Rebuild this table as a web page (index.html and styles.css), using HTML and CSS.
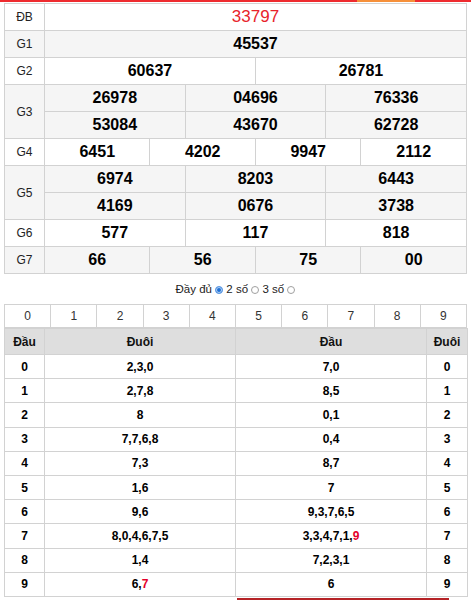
FILE: index.html
```html
<!DOCTYPE html>
<html lang="vi">
<head>
<meta charset="utf-8">
<title>KQXS</title>
<link rel="stylesheet" href="styles.css">
</head>
<body>
<div class="topbar"><span class="topbar-accent"></span></div>

<table class="kq">
  <colgroup>
    <col class="c-lbl">
    <col><col><col><col><col><col><col><col><col><col><col><col>
  </colgroup>
  <tbody>
    <tr class="odd">
      <td class="lbl">ĐB</td>
      <td class="v red" colspan="12">33797</td>
    </tr>
    <tr class="even">
      <td class="lbl">G1</td>
      <td class="v" colspan="12">45537</td>
    </tr>
    <tr class="odd">
      <td class="lbl">G2</td>
      <td class="v" colspan="6">60637</td>
      <td class="v" colspan="6">26781</td>
    </tr>
    <tr class="even">
      <td class="lbl" rowspan="2">G3</td>
      <td class="v" colspan="4">26978</td>
      <td class="v" colspan="4">04696</td>
      <td class="v" colspan="4">76336</td>
    </tr>
    <tr class="even">
      <td class="v" colspan="4">53084</td>
      <td class="v" colspan="4">43670</td>
      <td class="v" colspan="4">62728</td>
    </tr>
    <tr class="odd">
      <td class="lbl">G4</td>
      <td class="v" colspan="3">6451</td>
      <td class="v" colspan="3">4202</td>
      <td class="v" colspan="3">9947</td>
      <td class="v" colspan="3">2112</td>
    </tr>
    <tr class="even">
      <td class="lbl" rowspan="2">G5</td>
      <td class="v" colspan="4">6974</td>
      <td class="v" colspan="4">8203</td>
      <td class="v" colspan="4">6443</td>
    </tr>
    <tr class="even">
      <td class="v" colspan="4">4169</td>
      <td class="v" colspan="4">0676</td>
      <td class="v" colspan="4">3738</td>
    </tr>
    <tr class="odd">
      <td class="lbl">G6</td>
      <td class="v" colspan="4">577</td>
      <td class="v" colspan="4">117</td>
      <td class="v" colspan="4">818</td>
    </tr>
    <tr class="even">
      <td class="lbl">G7</td>
      <td class="v" colspan="3">66</td>
      <td class="v" colspan="3">56</td>
      <td class="v" colspan="3">75</td>
      <td class="v" colspan="3">00</td>
    </tr>
  </tbody>
</table>

<div class="options">Đầy đủ <span class="radio checked"></span> 2 số <span class="radio"></span> 3 số <span class="radio"></span></div>

<table class="digits">
  <tr>
    <td>0</td><td>1</td><td>2</td><td>3</td><td>4</td><td>5</td><td>6</td><td>7</td><td>8</td><td>9</td>
  </tr>
</table>

<table class="lt">
  <colgroup>
    <col class="c-dau">
    <col class="c-mid">
    <col class="c-mid2">
    <col class="c-duoi">
  </colgroup>
  <thead>
    <tr><th>Đầu</th><th>Đuôi</th><th>Đầu</th><th>Đuôi</th></tr>
  </thead>
  <tbody>
    <tr><td>0</td><td>2,3,0</td><td>7,0</td><td>0</td></tr>
    <tr><td>1</td><td>2,7,8</td><td>8,5</td><td>1</td></tr>
    <tr><td>2</td><td>8</td><td>0,1</td><td>2</td></tr>
    <tr><td>3</td><td>7,7,6,8</td><td>0,4</td><td>3</td></tr>
    <tr><td>4</td><td>7,3</td><td>8,7</td><td>4</td></tr>
    <tr><td>5</td><td>1,6</td><td>7</td><td>5</td></tr>
    <tr><td>6</td><td>9,6</td><td>9,3,7,6,5</td><td>6</td></tr>
    <tr><td>7</td><td>8,0,4,6,7,5</td><td>3,3,4,7,1,<span class="hl">9</span></td><td>7</td></tr>
    <tr><td>8</td><td>1,4</td><td>7,2,3,1</td><td>8</td></tr>
    <tr><td>9</td><td>6,<span class="hl">7</span></td><td>6</td><td>9</td></tr>
  </tbody>
</table>

<div class="bottom-line"></div>
</body>
</html>
```

FILE: styles.css
```css
html, body {
  margin: 0;
  padding: 0;
  background: #fff;
}

body {
  font-family: "Liberation Sans", Arial, sans-serif;
  color: #000;
  width: 471px;
}

.topbar {
  height: 2px;
  background: #ee2b2f;
  display: flex;
  justify-content: flex-end;
  padding-right: 56px;
  margin-bottom: 1px;
}

.topbar-accent {
  display: block;
  width: 58px;
  height: 2px;
  background: #f6903a;
}

table {
  border-collapse: collapse;
  table-layout: fixed;
  width: 463px;
  margin-left: 4px;
}

td, th {
  border: 1px solid #d2d2d2;
  padding: 0;
  text-align: center;
  vertical-align: middle;
}

.kq .c-lbl {
  width: 40px;
}

.kq td {
  height: 26px;
}

.kq tr.odd td {
  background: #fff;
}

.kq tr.even td {
  background: #f5f5f5;
}

.kq .lbl {
  font-size: 12px;
  color: #222;
}

.kq .v {
  font-size: 16px;
  font-weight: bold;
  color: #000;
}

.kq .v.red {
  color: #e8232b;
  font-weight: normal;
  font-size: 17px;
}

.options {
  height: 30px;
  line-height: 30px;
  text-align: center;
  font-size: 11.5px;
  color: #222;
}

.radio {
  display: inline-block;
  width: 6px;
  height: 6px;
  border: 1px solid #a0a0a0;
  border-radius: 50%;
  vertical-align: -1px;
  background: #fff;
}

.radio.checked {
  border-color: #5f9be3;
  background: #1e70d6;
  box-shadow: inset 0 0 0 1px #b9d4f4;
}

.digits td {
  height: 22px;
  font-size: 12px;
  color: #333;
}

.lt .c-dau {
  width: 40px;
}

.lt .c-mid {
  width: 191px;
}

.lt .c-mid2 {
  width: 191px;
}

.lt .c-duoi {
  width: 41px;
}

.lt th {
  height: 25px;
  background: #dedede;
  font-size: 12px;
  font-weight: bold;
  color: #111;
}

.lt td {
  height: 23.2px;
  font-size: 12px;
  font-weight: bold;
  color: #000;
}

.lt .hl {
  color: #e4002b;
}

.bottom-line {
  margin-top: 1px;
  margin-left: 237px;
  width: 212px;
  height: 2px;
  background: #b52226;
}
```
